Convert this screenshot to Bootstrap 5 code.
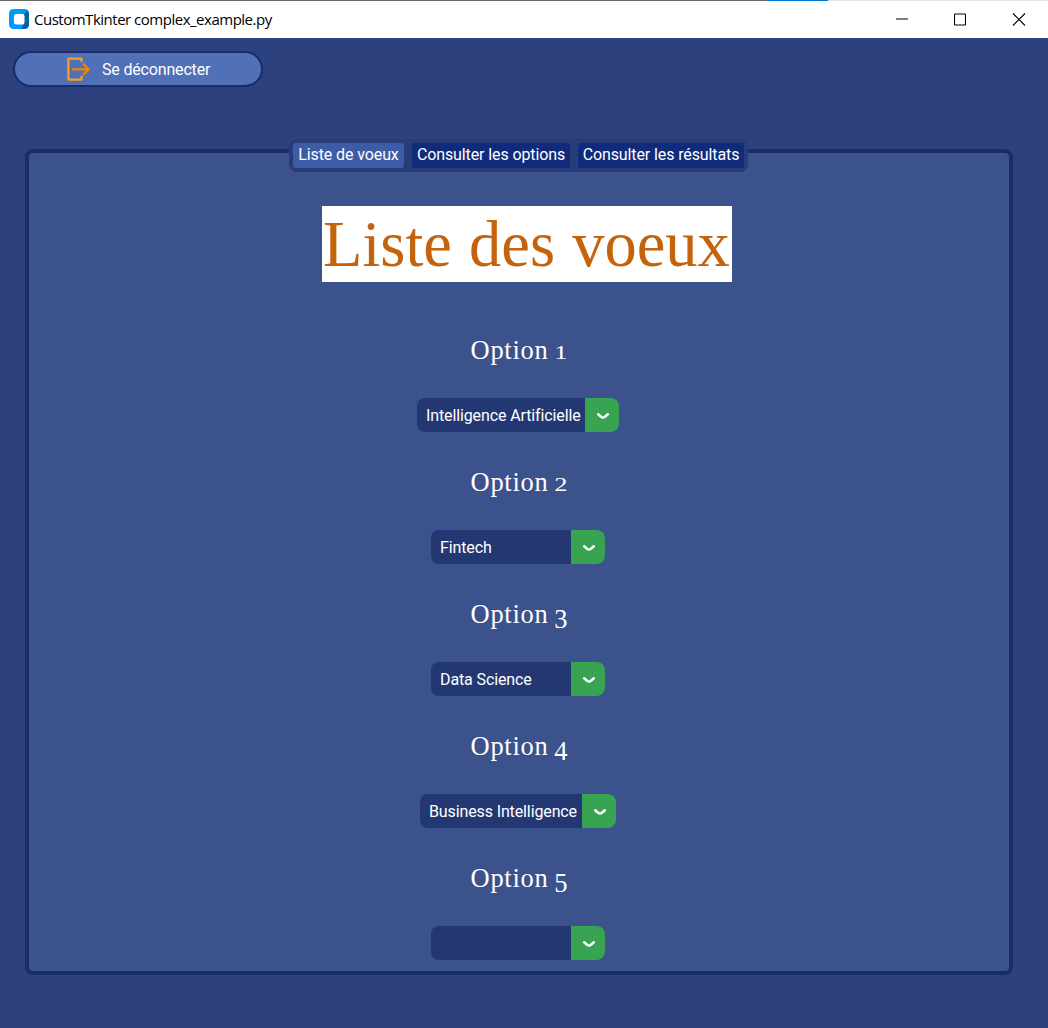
<!DOCTYPE html>
<html lang="fr">
<head>
<meta charset="utf-8">
<meta name="viewport" content="width=device-width, initial-scale=1">
<title>CustomTkinter complex_example.py</title>
<link rel="stylesheet" href="https://cdn.jsdelivr.net/npm/bootstrap@5.3.0/dist/css/bootstrap.min.css">
<style>
body{background:#2c417e;font:16px/20px Roboto,sans-serif;color:#fff;height:1028px;overflow:hidden}
.titlebar{height:38px;background:linear-gradient(90deg,#666 768px,#0078d7 768px 828px,#e5e5e5 828px) 0 0/100% 1px no-repeat #fff;color:#000;padding-left:9px}
.titlebar .caption{font:15px/20px "Open Sans",sans-serif;margin-left:5px;letter-spacing:-.49px;white-space:nowrap}
.winctl{width:58.5px;height:37px}
.logout{--bs-btn-padding-y:0;width:250px;height:36px;margin:13px 0 0 13px;background:#5070b8!important;border:2px solid #182d69!important;border-radius:18px;color:#fff!important;padding-left:51px;font-size:16px}
.logout span{letter-spacing:-.17px;padding-top:2px}
.board{margin:62px 35px 0 25px;height:826px;border:4px solid #182d69;border-radius:8px;background:#3c528d}
.tabstrip{margin-top:-14px;height:33px;width:459px;margin-left:260px;background:#283c77;border-radius:8px;padding:4px;gap:8px;flex-wrap:nowrap}
.tabstrip .nav-link{height:25px;padding:0;line-height:24px;border-radius:3px;background:#112b7c;color:#fff;text-align:center;white-space:nowrap;letter-spacing:-.11px}
.tabstrip .nav-link.active{background:#3d5ca6;color:#fff}
.heading{margin:34px 0 0 293px;width:410px;height:76px;background:#fff;color:#c5620c;font:64.5px/77px "Liberation Serif",serif;word-spacing:1px;padding-left:1px;white-space:nowrap}
.wishes{margin:50px 2px 0 0}
.wish{height:132px}
.wish h2{font:26.5px/37px "Liberation Serif",serif;letter-spacing:.7px;margin:0 0 30px;height:36px;padding-left:2px;word-spacing:-1.5px}
.numeral{display:inline-block;letter-spacing:0}
.low{transform:scale(1,.74);transform-origin:50% 77%}
.desc{transform:translateY(5px)}
.picker{height:34px;width:174px;border-radius:8px;overflow:hidden;background:#233873}
.picker span{padding:2px 0 0 9px;white-space:nowrap;letter-spacing:-.12px}
.arrow{width:34px;height:34px;background:#38a350;flex:none}
</style>
<script src="https://cdn.jsdelivr.net/npm/bootstrap@5.3.0/dist/js/bootstrap.bundle.min.js"></script>
</head>
<body>
<svg class="d-none"><symbol id="chev" viewBox="0 0 34 34"><path d="M13.2 16.3 16.3 19Q18 20 19.7 19L22.8 16.3" fill="none" stroke="#fff" stroke-width="2.5" stroke-linecap="round"/></symbol></svg>
<header class="titlebar d-flex align-items-center">
<svg width="20" height="20" viewBox="0 0 20 20"><rect width="20" height="20" rx="4.5" fill="#0099fb"/><path d="M15 5 18.5 1.5Q20 3 20 5v10q0 5-5 5h-3l3-5z" fill="#0560a8"/><rect x="5" y="5" width="10.5" height="10.5" rx="2.2" fill="#fff"/></svg>
<span class="caption">CustomTkinter complex_example.py</span>
<div class="d-flex ms-auto">
<svg class="winctl" viewBox="0 0 58.5 37"><path d="M23 18h12" stroke="#000"/></svg>
<svg class="winctl" viewBox="0 0 58.5 37"><path d="M23.5 13h11v11h-11z" fill="none" stroke="#000"/></svg>
<svg class="winctl" viewBox="0 0 58.5 37"><path d="m23 12.5 12 12m0-12-12 12" stroke="#000" stroke-width="1.1"/></svg>
</div>
</header>
<button class="btn logout d-flex align-items-center" type="button">
<svg width="24" height="24" viewBox="0 0 24 24" fill="none" stroke-width="2.2"><path d="M15.5 5V1.6H2.4v21H15.5V19" stroke="#f6a01c" stroke-linejoin="round"/><path d="M6 12.3h16.5M17 6.6 22.6 12.3 17 18" stroke="#f77f0a"/></svg>
<span class="ms-2 ps-1">Se déconnecter</span>
</button>
<main class="board">
<nav class="nav nav-pills tabstrip">
<a class="nav-link active" href="#" style="width:111px">Liste de voeux</a>
<a class="nav-link" href="#" style="width:158px">Consulter les options</a>
<a class="nav-link" href="#" style="width:166px">Consulter les résultats</a>
</nav>
<h1 class="heading">Liste des voeux</h1>
<div class="wishes d-flex flex-column">
<section class="wish d-flex flex-column align-items-center"><h2>Option <span class="numeral low">1</span></h2><div class="picker d-flex align-items-center justify-content-between" style="width:202px"><span>Intelligence Artificielle</span><svg class="arrow"><use href="#chev"/></svg></div></section>
<section class="wish d-flex flex-column align-items-center"><h2>Option <span class="numeral low">2</span></h2><div class="picker d-flex align-items-center justify-content-between"><span>Fintech</span><svg class="arrow"><use href="#chev"/></svg></div></section>
<section class="wish d-flex flex-column align-items-center"><h2>Option <span class="numeral desc">3</span></h2><div class="picker d-flex align-items-center justify-content-between"><span>Data Science</span><svg class="arrow"><use href="#chev"/></svg></div></section>
<section class="wish d-flex flex-column align-items-center"><h2>Option <span class="numeral desc">4</span></h2><div class="picker d-flex align-items-center justify-content-between" style="width:196px"><span>Business Intelligence</span><svg class="arrow"><use href="#chev"/></svg></div></section>
<section class="wish d-flex flex-column align-items-center"><h2>Option <span class="numeral desc">5</span></h2><div class="picker d-flex align-items-center justify-content-between"><span></span><svg class="arrow"><use href="#chev"/></svg></div></section>
</div>
</main>
</body>
</html>
